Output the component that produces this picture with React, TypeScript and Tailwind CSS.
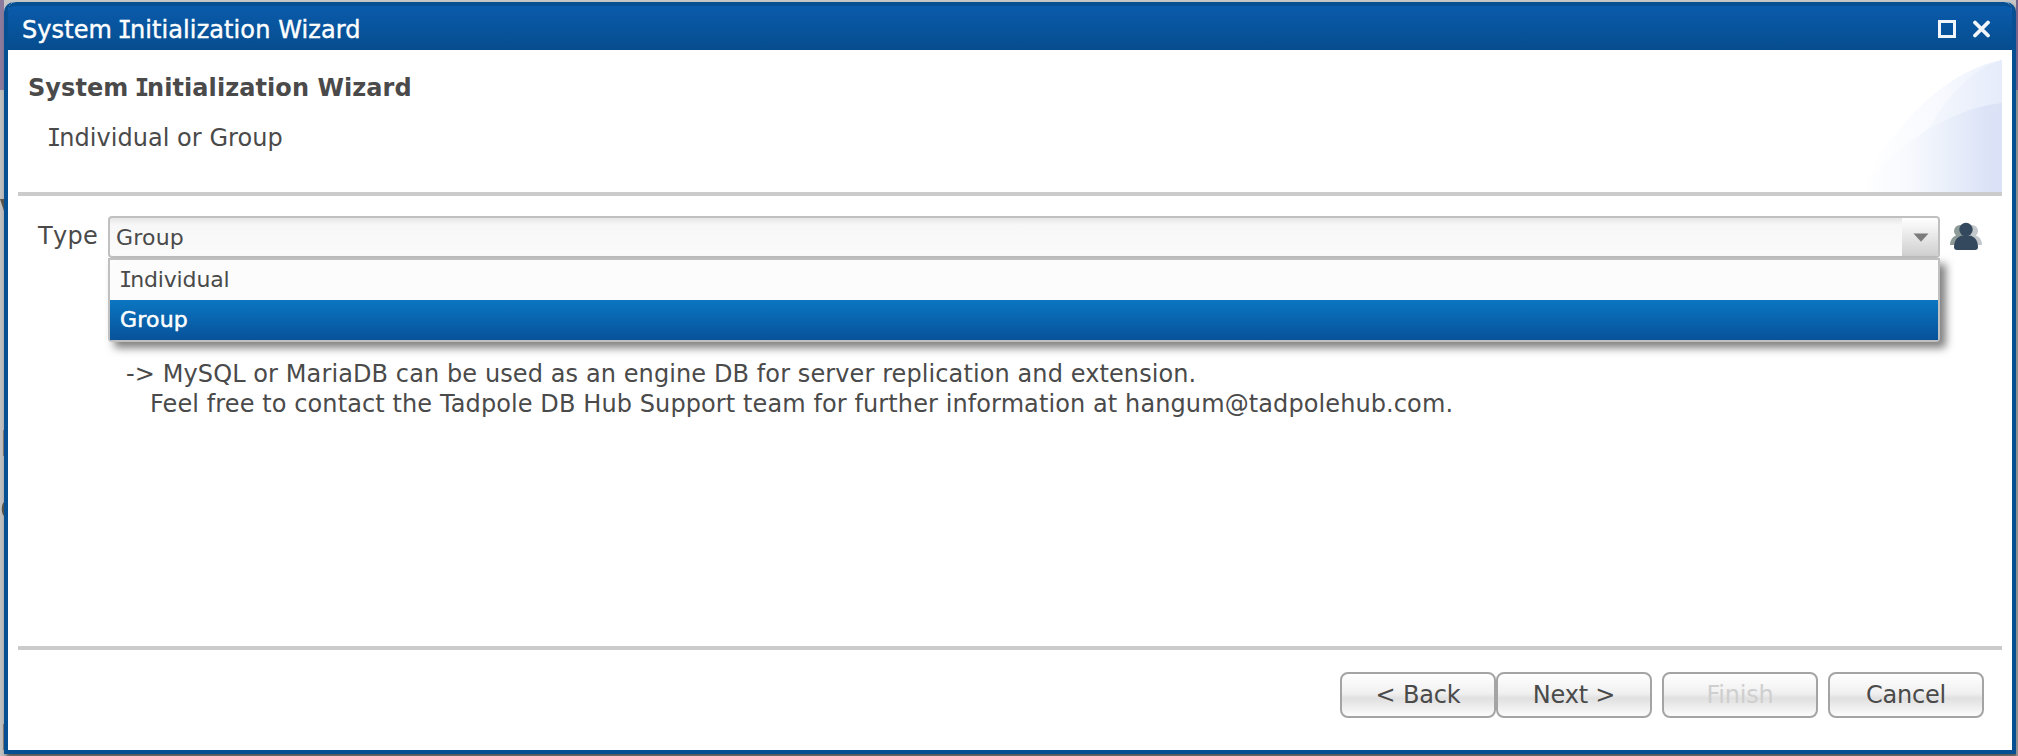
import type { ReactNode } from "react";

const CapI = () => <span className="-mx-[0.09em] font-['DejaVu_Sans_Mono']">I</span>;

function PushButton({ children, disabled = false, className = "" }: { children: ReactNode; disabled?: boolean; className?: string }) {
  return (
    <button
      disabled={disabled}
      className={`h-[46px] w-[156px] rounded-[8px] border-2 border-[#a4a4a4] bg-[linear-gradient(#ffffff_0%,#f0f0f0_46%,#e0e0e0_58%,#fcfcfc_100%)] text-center text-[24px] leading-[42px] disabled:text-[#cfcfcf] ${className}`}
    >
      <span className="tracking-[-0.2px]">{children}</span>
    </button>
  );
}

function TitleBar() {
  return (
    <div className="flex h-12 items-center justify-between rounded-t-[8px] border-t-4 border-[#064f93] bg-linear-to-b from-[#0a5bac] to-[#064d8e] pr-[20px] pl-[14px] text-white">
      <span className="mt-[3px] text-[24px] leading-[40px] tracking-[0.09px] [-webkit-text-stroke:0.4px_white]">System <CapI />nitialization Wizard</span>
      <svg width="54" height="20" viewBox="0 0 54 20" fill="none" className="mt-[4px] stroke-[#f2f6fa]">
        <rect x="1.5" y="1.5" width="15" height="15" strokeWidth="3" />
        <path d="M37 2.5L50 15.5M50 2.5L37 15.5" strokeWidth="3.8" strokeLinecap="round" />
      </svg>
    </div>
  );
}

function Swoosh() {
  return (
    <svg width="150" height="132" viewBox="0 0 150 132" className="shrink-0">
      <defs>
        <linearGradient id="a" gradientUnits="userSpaceOnUse" x1="0" y1="0" x2="150" y2="0">
          <stop offset="0.1" stopColor="#fff" />
          <stop offset="0.6" stopColor="#f7f9fe" />
          <stop offset="1" stopColor="#eaf0fc" />
        </linearGradient>
        <linearGradient id="b" gradientUnits="userSpaceOnUse" x1="50" y1="0" x2="150" y2="0">
          <stop offset="0" stopColor="#fafbfe" />
          <stop offset="1" stopColor="#e5ecfa" />
        </linearGradient>
        <linearGradient id="c" gradientUnits="userSpaceOnUse" x1="0" y1="0" x2="150" y2="0">
          <stop offset="0.05" stopColor="#fff" />
          <stop offset="0.35" stopColor="#f9fafe" />
          <stop offset="0.65" stopColor="#e9effa" />
          <stop offset="0.9" stopColor="#dce3f7" />
          <stop offset="1" stopColor="#dbe2f7" />
        </linearGradient>
      </defs>
      <path d="M4 132C38 72 88 12 150 0V132Z" fill="url(#a)" />
      <path d="M50 132C64 78 105 12 150 0V132Z" fill="url(#b)" />
      <path d="M4 132C36 92 95 48 150 43V132Z" fill="url(#c)" />
    </svg>
  );
}

function GroupIcon() {
  return (
    <svg width="32" height="29" viewBox="0 0 32 29">
      <g fill="#8e9b99">
        <circle cx="10" cy="9" r="6" />
        <path d="M0 23c0-6 4-10 9-10l4 10z" />
      </g>
      <g fill="#c3c8cd">
        <circle cx="22" cy="9" r="6" />
        <path d="M32 23c0-6-4-10-9-10l-4 10z" />
      </g>
      <circle cx="16" cy="7.5" r="6.7" fill="#34495e" />
      <path d="M4 25c0-6.500 4-11.500 9-11.500h6c5 0 9 5 9 11.500q0 3-3 3H7q-3 0-3-3z" fill="#34495e" />
    </svg>
  );
}

function TypeSelect() {
  return (
    <div className="relative h-[42px] w-[1832px]">
      <div className="flex h-[42px] justify-between overflow-hidden rounded-[4px] border-2 border-[#c0c0c0] bg-[linear-gradient(#e6e6e6_0px,#f7f7f7_7px,#fbfbfb_100%)]">
        <span className="pl-[6px] text-[22px] leading-[40px] tracking-[0.2px]">Group</span>
        <span className="flex w-9 items-center justify-center bg-linear-to-b from-white to-[#cfcfcf]">
          <svg width="16" height="10" viewBox="0 0 16 10" className="mt-[2px] ml-[2px]">
            <path d="M0.500 0.500H15.500L8 8.800Z" fill="#7b7b7b" />
          </svg>
        </span>
      </div>
      <ul className="absolute top-[42px] left-0 w-full rounded-b-[4px] border-2 border-[#c0c0c0] bg-[#fcfcfc] text-[22px] shadow-[6px_6px_8px_rgba(0,0,0,0.5)]">
        <li className="h-10 pl-[11px] leading-[40px] tracking-[-0.15px]"><CapI />ndividual</li>
        <li className="h-10 bg-linear-to-b from-[#0b76c2] to-[#08529a] pl-[10px] leading-[40px] tracking-[0.2px] text-white [-webkit-text-stroke:0.5px_white]">Group</li>
      </ul>
    </div>
  );
}

export default function App() {
  return (
    <div className="flex h-[756px] w-[2018px] overflow-hidden bg-[#c6c6c6] font-['DejaVu_Sans',sans-serif] text-[24px] text-[#4a4a4a]">
      <div className="h-full w-1 bg-[linear-gradient(#8c7b9c_90px,#bfbfbf_90px)]">
        <svg width="4" height="756" viewBox="0 0 4 756">
          <path d="M0 199H4V211Z M4 502C1 505 1 513 4 516Z" fill="#5a5348" />
          <path d="M3 430H4V456H3Z M3 724H4V750H3Z" fill="#86796f" />
        </svg>
      </div>
      <div className="mt-[2px] flex h-[752px] w-[2012px] flex-col rounded-t-[10px] border-x-4 border-b-4 border-[#064f93] bg-white shadow-[2px_4px_4px_#555]">
        <TitleBar />
        <div className="mx-[10px] mt-[10px] flex h-[136px] justify-between border-b-4 border-[#cbcbcb]">
          <div className="pl-[10px]">
            <h1 className="mt-[13px] text-[24px] leading-[30px] font-bold tracking-[0.07px]">System <CapI />nitialization Wizard</h1>
            <p className="mt-5 pl-[21px] leading-[30px] tracking-[0.05px]"><CapI />ndividual or Group</p>
          </div>
          <Swoosh />
        </div>
        <div className="flex h-[450px] flex-col px-[30px] pt-5">
          <div className="flex">
            <label className="w-[70px] leading-[40px] tracking-[0.3px] [font-kerning:none]">Type</label>
            <TypeSelect />
            <div className="mt-[6px] ml-[10px]"><GroupIcon /></div>
          </div>
          <div className="mt-[100px] pl-[88px] leading-[30px] tracking-[0.1px]">
            <p className="pt-px">-&gt; MySQL or MariaDB can be used as an engine DB for server replication and extension.</p>
            <p className="pl-[24px]">Feel free to contact the Tadpole DB Hub Support team for further information at hangum@tadpolehub.com.</p>
          </div>
        </div>
        <div className="mx-[10px] flex grow justify-end border-t-4 border-[#cbcbcb] pt-[22px] pr-[18px]">
          <PushButton>&lt; Back</PushButton>
          <PushButton>Next &gt;</PushButton>
          <PushButton disabled className="ml-[10px]">Finish</PushButton>
          <PushButton className="ml-[10px]">Cancel</PushButton>
        </div>
      </div>
      <div className="h-full w-[2px] bg-[linear-gradient(#75628a_90px,#8f8f8f_90px)]" />
    </div>
  );
}
